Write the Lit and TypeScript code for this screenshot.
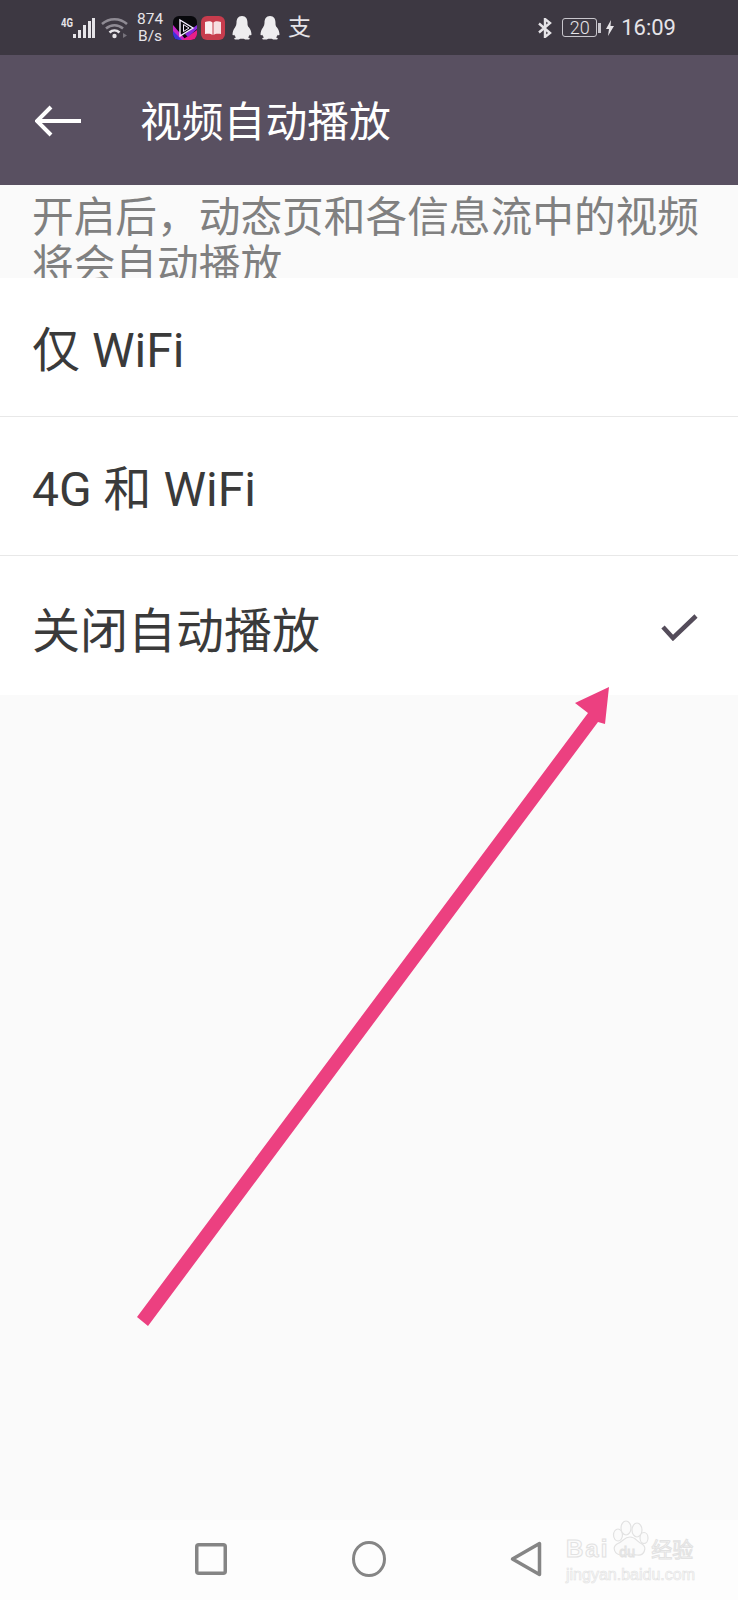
//
// video autoplay settings screen
//

import { LitElement, html, css, svg } from 'lit'
import { customElement } from 'lit/decorators.js'

const penguin = svg`
  <path fill="#eeedef" d="M10 0C6 0 4.500 3 4.500 7c0 1.500-.5 3-1.500 4.500C1.500 13.500.5 16 .5 18.500c0 1 .8 1 1.800.2.300 1 .900 1.900 1.700 2.500C2.800 21.700 2 22.300 2.300 23c.4.700 4.700 1 6-.2h3.400c1.300 1.200 5.600.9 6 .2.300-.7-.5-1.300-1.700-1.800.8-.6 1.400-1.500 1.700-2.500 1 .8 1.800.8 1.800-.2 0-2.500-1-5-2.500-7C15.500 10 15.500 8.500 15.500 7 15.500 3 14 0 10 0z"/>
`

@customElement('app-root')
export class AppRoot extends LitElement {

  static styles = css`
    :host {
      background: #fafafa;
      display: flex;
      flex-direction: column;
      font-family: Roboto, "Noto Sans CJK SC", sans-serif;
      height: 1600px;
      overflow: hidden;
      position: relative;
      width: 738px;
    }

    svg {
      display: block;
      flex: none;
    }

    .status {
      align-items: center;
      background: #3d3842;
      color: #e6e4e8;
      display: flex;
      height: 55px;
      padding: 0 62px 0 61px;
    }

    .speed {
      font-size: 15.5px;
      line-height: 17px;
      margin: 0 10px 0 8px;
      text-align: center;
      width: 26px;
    }

    .apps {
      align-items: center;
      display: flex;
      gap: 4px;
    }

    .penguin {
      margin-left: 3px;
    }

    .penguin + .penguin {
      margin-left: 4px;
    }

    .zhi {
      font-size: 23px;
      line-height: 24px;
      margin-left: 4px;
    }

    .right {
      align-items: center;
      display: flex;
      margin-left: auto;
    }

    .battery {
      border: 1px solid #c8c6cc;
      border-radius: 3px;
      box-sizing: border-box;
      font-size: 18px;
      font-weight: 300;
      height: 19px;
      line-height: 17px;
      margin-left: 10px;
      text-align: center;
      width: 35px;
    }

    .nub {
      background: #c8c6cc;
      height: 10px;
      margin-left: 1px;
      width: 3px;
    }

    .bolt {
      margin-left: 5px;
    }

    .clock {
      font-size: 22px;
      margin-left: 7px;
    }

    .toolbar {
      align-items: center;
      background: #595061;
      box-sizing: border-box;
      color: #fff;
      display: flex;
      gap: 59px;
      height: 130px;
      padding: 2px 0 0 35px;
    }

    .title {
      font-size: 41.8px;
      line-height: 50px;
      padding-top: 4px;
    }

    .hint {
      box-sizing: border-box;
      color: #808080;
      font-size: 41.7px;
      height: 93px;
      line-height: 48px;
      overflow: hidden;
      padding: 9px 32px 0;
    }

    .list {
      background: #fff;
    }

    .row {
      align-items: center;
      border-bottom: 1px solid #e8e8e8;
      box-sizing: border-box;
      color: #3a3a3a;
      display: flex;
      font-size: 48px;
      height: 139px;
      justify-content: space-between;
      padding: 0 40px 3px 32px;
    }

    .row.off {
      border-bottom: 0;
      padding: 2px 40px 0 32px;
    }

    .main {
      flex: 1;
    }

    .nav {
      align-items: center;
      background: #fdfdfd;
      box-sizing: border-box;
      display: flex;
      gap: 124px;
      height: 80px;
      padding: 0 0 2px 195px;
    }

    .nav-circle {
      margin-left: 1px;
    }

    .arrow {
      left: 0;
      pointer-events: none;
      position: absolute;
      top: 0;
    }

    .mark {
      color: #fbfbfb;
      left: 566px;
      position: absolute;
      -webkit-text-stroke: 1px #e2e2e2;
      top: 1520px;
      width: 136px;
    }

    .mark-top {
      align-items: flex-end;
      display: flex;
      height: 42px;
    }

    .mark-bai {
      font-family: "Liberation Sans", sans-serif;
      font-size: 24px;
      font-weight: 700;
      letter-spacing: 2px;
      line-height: 26px;
    }

    .mark-paw {
      height: 42px;
      position: relative;
      width: 42px;
    }

    .mark-du {
      font-family: "Liberation Sans", sans-serif;
      font-size: 14px;
      left: 10px;
      line-height: 16px;
      position: absolute;
      top: 24px;
    }

    .mark-cn {
      font-family: "Noto Sans CJK SC", sans-serif;
      font-size: 21px;
      line-height: 28px;
    }

    .mark-url {
      font-family: "Liberation Sans", sans-serif;
      font-size: 16px;
      line-height: 20px;
      margin-top: 3px;
      -webkit-text-stroke: 0.6px #e2e2e2;
      white-space: nowrap;
    }
  `

  private statusBar() {

    return html`
      <div class="status">
        <svg width="34" height="24" viewBox="0 0 34 24" fill="#e6e4e8">
          <text x="0" y="11" font-size="12" font-weight="700" font-family="Roboto" textLength="12" lengthAdjust="spacingAndGlyphs">4G</text>
          <rect x="12" y="18" width="3" height="4"/>
          <rect x="17" y="14" width="3" height="8"/>
          <rect x="22" y="9" width="3" height="13"/>
          <rect x="27" y="5" width="3" height="17"/>
          <rect x="31" y="2" width="3" height="20"/>
        </svg>
        <svg style="margin-left:6px" width="28" height="24" viewBox="0 0 28 24" fill="none">
          <path d="M1 8c7-6.500 18-6.500 25 0" stroke="#8f8b94" stroke-width="2.5"/>
          <path d="M5 12.500c5-4.500 12-4.500 17 0" stroke="#8f8b94" stroke-width="2.5"/>
          <path d="M8.500 16.500c3-2.800 7-2.800 10 0" stroke="#e6e4e8" stroke-width="2.5"/>
          <circle cx="13.500" cy="20" r="2.200" fill="#e6e4e8"/>
          <path d="M22 17v5l4-2.500z" fill="#77737c"/>
        </svg>
        <div class="speed">874<br>B/s</div>
        <div class="apps">
          <svg width="24" height="24" viewBox="0 0 24 24">
            <rect width="24" height="24" rx="6" fill="#08080c"/>
            <path d="M0 11L12 24H6a6 6 0 0 1-6-6z" fill="#3b35d8"/>
            <path d="M0 15L9 24H13L0 9z" fill="#c422c8"/>
            <path d="M9 24L24 14V18a6 6 0 0 1-6 6z" fill="#e81f88"/>
            <path d="M12 18L24 9V13L15 21z" fill="#8a2ae0"/>
            <path d="M7 4l13 8-13 8z" fill="none" stroke="#f4ecff" stroke-width="1.400"/>
            <path d="M10.500 8.500v7l5.500-3.500z" fill="none" stroke="#f4ecff" stroke-width="1"/>
          </svg>
          <svg width="24" height="24" viewBox="0 0 24 24">
            <rect width="24" height="24" rx="6" fill="#c73c4d"/>
            <path d="M4 6c3-1.200 6-1.200 7.500.5V19c-1.500-1.500-4.500-1.500-7.500-1z" fill="#fbeef0"/>
            <path d="M20 6c-3-1.200-6-1.200-7.500.5V19c1.500-1.500 4.500-1.500 7.500-1z" fill="#f6dfe2"/>
          </svg>
          <svg class="penguin" width="20" height="24" viewBox="0 0 20 24">${penguin}</svg>
          <svg class="penguin" width="20" height="24" viewBox="0 0 20 24">${penguin}</svg>
          <div class="zhi">支</div>
        </div>
        <div class="right">
          <svg width="14" height="20" viewBox="0 0 14 20" fill="none" stroke="#e6e4e8" stroke-width="2.400">
            <path d="M1 5.500l11 9.500-5 4V1l5 4L1 14.500"/>
          </svg>
          <div class="battery">20</div>
          <div class="nub"></div>
          <svg class="bolt" width="8" height="16" viewBox="0 0 8 16">
            <path d="M5 0L0 9h3l-1 7 6-10H4.500z" fill="#e6e4e8"/>
          </svg>
          <div class="clock">16:09</div>
        </div>
      </div>
    `

  }

  private navBar() {

    return html`
      <div class="nav">
        <svg width="32" height="32" viewBox="0 0 32 32" fill="none" stroke="#858585" stroke-width="3.500">
          <rect x="1.750" y="1.750" width="28.500" height="28.500" rx="2"/>
        </svg>
        <svg class="nav-circle" width="34" height="36" viewBox="0 0 34 36" fill="none" stroke="#858585" stroke-width="3">
          <ellipse cx="17" cy="18" rx="15.500" ry="16.500"/>
        </svg>
        <svg width="32" height="36" viewBox="0 0 32 36" fill="none" stroke="#858585" stroke-width="3.500" stroke-linejoin="round">
          <path d="M29.500 2.500v31L2.500 18z"/>
        </svg>
      </div>
    `

  }

  private watermark() {

    return html`
      <div class="mark">
        <div class="mark-top">
          <span class="mark-bai">Bai</span>
          <div class="mark-paw">
            <svg width="40" height="42" viewBox="0 0 40 42" fill="#fbfbfb" stroke="#e2e2e2" stroke-width="1.200">
              <ellipse cx="9" cy="15" rx="4.500" ry="6"/>
              <ellipse cx="17" cy="8" rx="5" ry="7"/>
              <ellipse cx="28" cy="10" rx="5" ry="7"/>
              <ellipse cx="35" cy="18" rx="4" ry="5.500"/>
              <path d="M21 17c6 0 7 5 12 7 5 3 3 12-5 11-3 0-5-1-7-1s-5 1-8 1C5 35 3 27 8 24c6-2 7-7 13-7z"/>
            </svg>
            <span class="mark-du">du</span>
          </div>
          <span class="mark-cn">经验</span>
        </div>
        <div class="mark-url">jingyan.baidu.com</div>
      </div>
    `

  }

  protected render() {

    return html`
      ${this.statusBar()}
      <div class="toolbar">
        <svg width="46" height="32" viewBox="0 0 46 32" fill="none" stroke="#fff" stroke-width="4">
          <path d="M46 16H3M16 2L2 16l14 14"/>
        </svg>
        <div class="title">视频自动播放</div>
      </div>
      <div class="main">
        <div class="hint">开启后，动态页和各信息流中的视频<br>将会自动播放</div>
        <div class="list">
          <div class="row">仅 WiFi</div>
          <div class="row">4G 和 WiFi</div>
          <div class="row off">
            关闭自动播放
            <svg width="37" height="28" viewBox="0 0 37 28" fill="none" stroke="#544c5a" stroke-width="4.500">
              <path d="M2 14l10 11L35 3"/>
            </svg>
          </div>
        </div>
      </div>
      ${this.navBar()}
      <svg class="arrow" width="738" height="1600" viewBox="0 0 738 1600">
        <path fill="#ec4080" d="M609 687L575 703L588 713L137 1317L148 1326L598 722L605 724Z"/>
      </svg>
      ${this.watermark()}
    `

  }

}
